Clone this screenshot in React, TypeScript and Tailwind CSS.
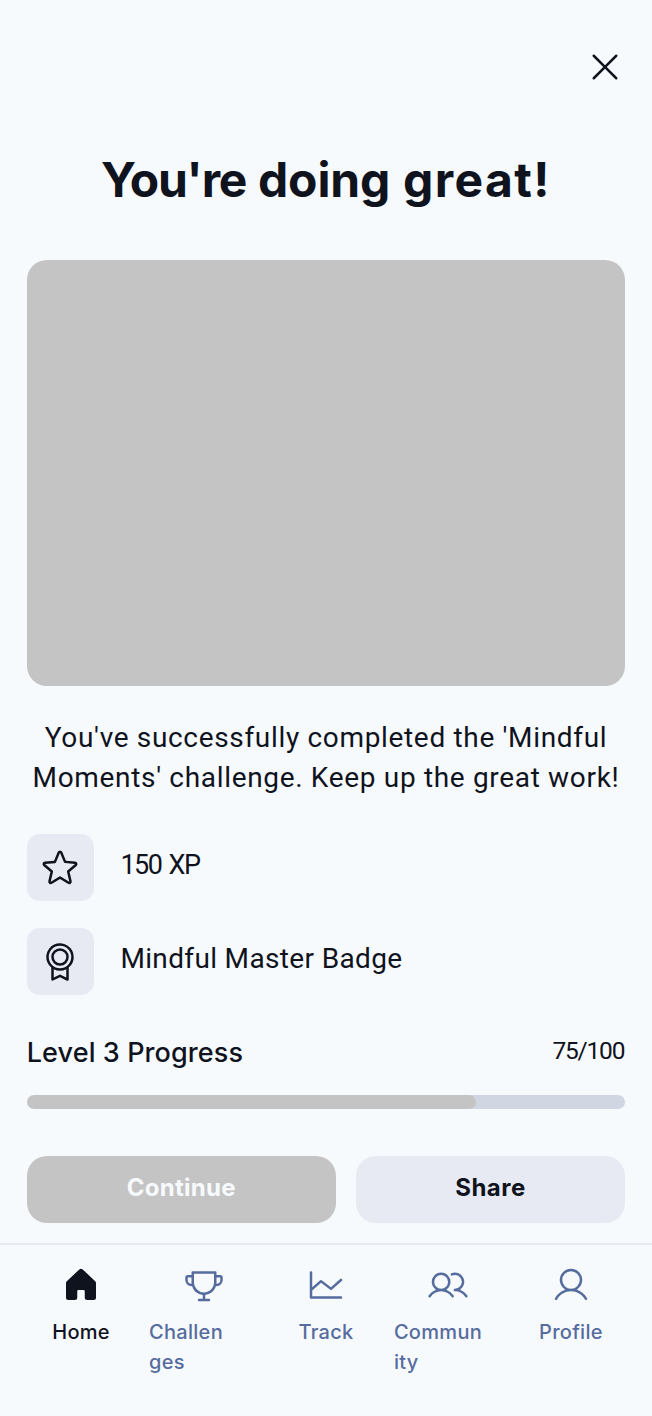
import { PiChartLine, PiMedal, PiStar, PiTrophy, PiUser, PiUsers, PiX } from "react-icons/pi";

const HouseFill = () => (
  <svg viewBox="0 0 256 256" fill="currentColor" className="size-10">
    <path d="M224,115.55V208a16,16,0,0,1-16,16H168a16,16,0,0,1-16-16V168a8,8,0,0,0-8-8H112a8,8,0,0,0-8,8v40a16,16,0,0,1-16,16H48a16,16,0,0,1-16-16V115.55a16,16,0,0,1,5.17-11.78l80-75.48.11-.11a16,16,0,0,1,21.53,0,1.14,1.14,0,0,0,.11.11l80,75.48A16,16,0,0,1,224,115.55Z" />
  </svg>
);

const rewards = [
  { id: "xp", label: "150 XP", icon: <PiStar className="size-10" />, text: "text-[27px] tracking-[-1.5px] [word-spacing:2px]" },
  { id: "badge", label: "Mindful Master Badge", icon: <PiMedal className="size-10" />, text: "text-[28px] tracking-[0.35px]" },
];

// Long labels break onto a second line
const tabs = [
  { id: "home", lines: ["Home"], icon: <HouseFill /> },
  { id: "challenges", lines: ["Challen", "ges"], icon: <PiTrophy className="size-10" /> },
  { id: "track", lines: ["Track"], icon: <PiChartLine className="size-10" /> },
  { id: "community", lines: ["Commun", "ity"], icon: <PiUsers className="size-10" /> },
  { id: "profile", lines: ["Profile"], icon: <PiUser className="size-10" /> },
];

const App = () => {
  const progress = 75;

  return (
    <div className="flex h-[1416px] w-[652px] flex-col overflow-hidden bg-[#f7fafd] font-['Inter',sans-serif] text-[#0f131d]">
      <header className="flex h-[150px] items-start justify-end pt-[47px] pr-[27px]">
        <button aria-label="Close">
          <PiX className="size-10" />
        </button>
      </header>

      <main className="flex flex-col px-[26.75px]">
        <h1 className="text-center text-[48px] leading-[60px] font-bold whitespace-nowrap [word-spacing:1.5px]">
          <span className="tracking-[-1.2px]">You're </span>
          <span className="tracking-[-0.1px]">doing </span>
          <span className="tracking-[1.4px]">great!</span>
        </h1>

        <div className="mt-[50px] h-[426px] rounded-[20px] bg-[#c4c4c4]" />

        <p className="mt-8 text-center font-['Roboto',sans-serif] text-[28px] leading-10 tracking-[0.67px] whitespace-nowrap">
          You've successfully completed the 'Mindful
          <br />
          Moments' challenge. Keep up the great work!
        </p>

        <ul className="mt-9 flex flex-col gap-[27px]">
          {rewards.map((reward) => (
            <li key={reward.id} className="flex items-center gap-[26.75px]">
              <div className="flex h-[67px] w-[66.9px] items-center justify-center rounded-[13px] bg-[#e7eaf3]">
                {reward.icon}
              </div>
              <span className={`pb-[5px] font-['Roboto',sans-serif] leading-10 ${reward.text}`}>
                {reward.label}
              </span>
            </li>
          ))}
        </ul>

        {/* Level progress */}
        <div className="mt-[38px] flex h-[39px] items-start justify-between">
          <span className="text-[27px] leading-10 font-medium tracking-[0.1px]">Level 3 Progress</span>
          <span className="pr-px font-['Roboto',sans-serif] text-[24.5px] leading-9 tracking-[-1.2px]">75/100</span>
        </div>
        <div className="mt-[23px] h-3.5 overflow-hidden rounded-[7px] bg-[#d0d7e3]">
          <div className="h-full rounded-[7px] bg-[#c4c4c4]" style={{ width: `${progress}%` }} />
        </div>

        <div className="mt-[47px] flex gap-5">
          <button className="h-[67px] w-[309px] rounded-[20px] bg-[#c4c4c4] pb-1 text-[24px] font-bold tracking-[0.25px] text-[#f7fafd]">
            Continue
          </button>
          <button className="h-[67px] flex-1 rounded-[20px] bg-[#e7eaf3] pb-1 text-[24px] font-bold tracking-[0.5px]">
            Share
          </button>
        </div>
      </main>

      <nav className="mt-5 flex flex-1 gap-[13.375px] border-t-2 border-[#e7eaf1] px-[26.5px] pt-5">
        {tabs.map((tab) => (
          <a
            key={tab.id}
            className={`flex flex-1 basis-0 flex-col items-center gap-3 ${tab.id === "home" ? "text-[#0f131d]" : "text-[#566c9e]"}`}
          >
            {tab.icon}
            <span className={`text-[20px] leading-[30px] font-medium tracking-[0.3px] ${tab.lines.length > 1 ? "w-full" : ""}`}>
              {tab.lines.map((line) => (
                <span key={line} className="block">
                  {line}
                </span>
              ))}
            </span>
          </a>
        ))}
      </nav>
    </div>
  );
};

export default App;
